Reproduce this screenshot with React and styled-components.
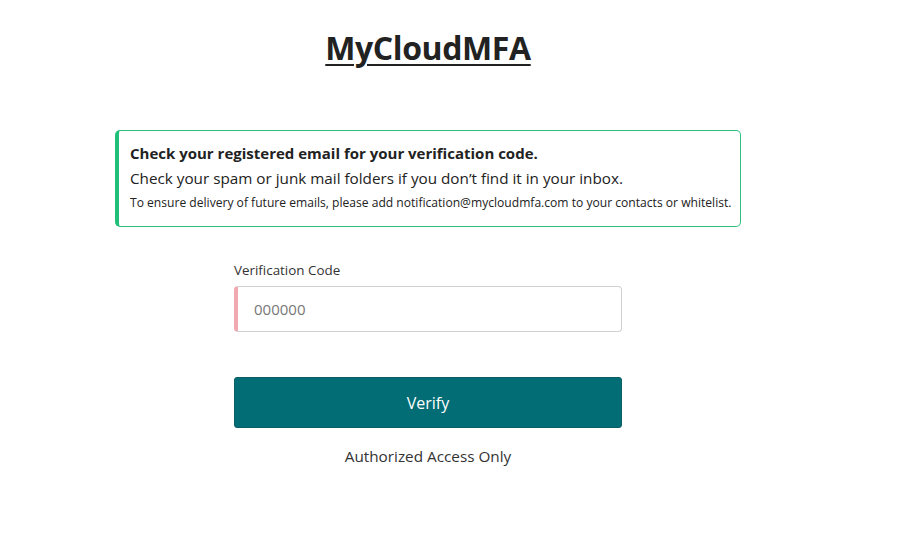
import React from "react";
import styled, { createGlobalStyle } from "styled-components";

const GlobalStyle = createGlobalStyle`
  body {
    margin: 0;
    background: #ffffff;
    font-family: "Open Sans", "Noto Sans", sans-serif;
    color: #212529;
  }
`;

const Page = styled.main`
  width: 856px;
  display: flex;
  flex-direction: column;
  align-items: center;
  padding-top: 26px;
`;

const Title = styled.h1`
  margin: 0;
  font-size: 32px;
  font-weight: 700;
  color: #222;
  text-decoration: underline;
  text-decoration-thickness: 2px;
  text-underline-offset: 4px;
  letter-spacing: -0.4px;
`;

const Alert = styled.div`
  margin-top: 61px;
  width: 626px;
  box-sizing: border-box;
  border: 1px solid #2ebf7e;
  border-left: 4px solid #20c07a;
  border-radius: 5px;
  padding: 11px 11px 12px 11px;
  display: flex;
  flex-direction: column;
  gap: 3px;
`;

const AlertLine = styled.div`
  font-size: ${(p) => p.$size}px;
  font-weight: ${(p) => (p.$bold ? 700 : 400)};
  color: #222;
  line-height: 22px;
  white-space: nowrap;
`;

const Form = styled.form`
  margin-top: 34px;
  width: 388px;
  display: flex;
  flex-direction: column;
`;

const Label = styled.label`
  font-size: 13.4px;
  color: #333;
  margin-bottom: 7px;
`;

const Input = styled.input`
  height: 46px;
  box-sizing: border-box;
  border: 1px solid #d0d0d0;
  border-left: 4px solid #f0a9b1;
  border-radius: 4px;
  padding: 0 16px;
  font-family: inherit;
  font-size: 15px;
  color: #333;
  outline: none;
  &::placeholder {
    color: #777;
  }
`;

const Button = styled.button`
  margin-top: 45px;
  height: 51px;
  border: 1px solid #0a5e66;
  border-radius: 3px;
  background: #026d75;
  color: #fff;
  font-family: inherit;
  font-size: 16px;
  cursor: pointer;
`;

const Footer = styled.p`
  margin: 18px 0 0;
  text-align: center;
  font-size: 15.3px;
  color: #333;
`;

export default function App() {
  return (
    <>
      <GlobalStyle />
      <Page>
        <Title>MyCloudMFA</Title>
        <Alert>
          <AlertLine $size={15} $bold>
            Check your registered email for your verification code.
          </AlertLine>
          <AlertLine $size={15.25}>
            Check your spam or junk mail folders if you don’t find it in your inbox.
          </AlertLine>
          <AlertLine $size={12.1}>
            To ensure delivery of future emails, please add notification@mycloudmfa.com to your contacts or whitelist.
          </AlertLine>
        </Alert>
        <Form onSubmit={(e) => e.preventDefault()}>
          <Label htmlFor="code">Verification Code</Label>
          <Input id="code" placeholder="000000" />
          <Button type="submit">Verify</Button>
          <Footer>Authorized Access Only</Footer>
        </Form>
      </Page>
    </>
  );
}
